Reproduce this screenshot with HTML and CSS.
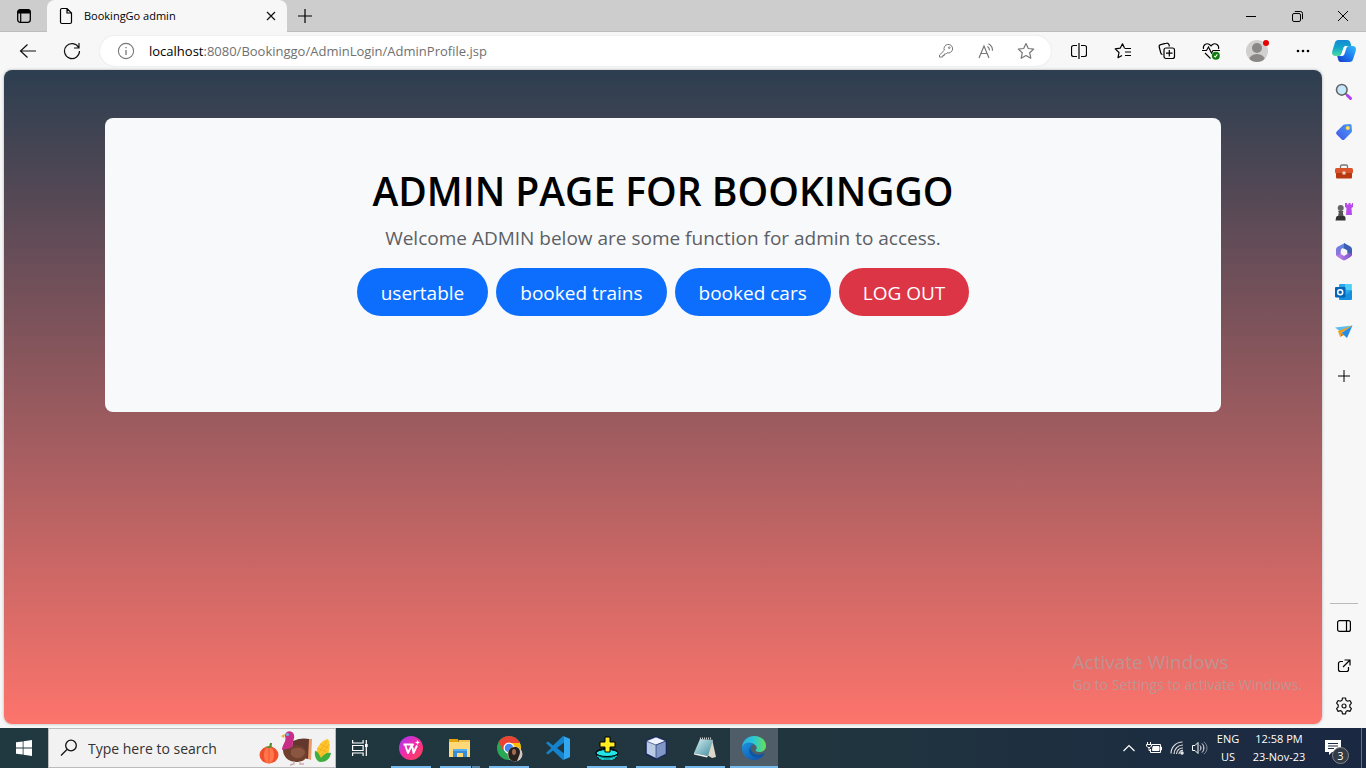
FILE: index.html
```html
<!DOCTYPE html>
<html lang="en">
<head>
<meta charset="utf-8">
<title>BookingGo admin</title>
<link rel="stylesheet" href="styles.css">
</head>
<body>
<div class="tabs">
  <button class="tab-actions" aria-label="Tab actions"><svg width="16" height="16" viewBox="0 0 16 16"><rect x="1.7" y="1.7" width="12.6" height="12.6" rx="2.5" fill="none" stroke="#000" stroke-width="1.3"/><path d="M1.5 5.5V4a2.5 2.5 0 0 1 2.5-2.500h8A2.500 2.500 0 0 1 14.500 4v1.500z"/><path d="M4.700 5v9" stroke="#000" stroke-width="1.200"/></svg></button>
  <div class="tab">
    <svg width="16" height="18" viewBox="0 0 16 18" fill="none" stroke="#000" stroke-width="1.200"><path d="M2.500 3A1.500 1.500 0 0 1 4 1.500h5L13.500 6v9a1.500 1.500 0 0 1-1.500 1.500H4A1.500 1.500 0 0 1 2.500 15zM9 1.500V6h4.500"/></svg>
    <span class="tab-title">BookingGo admin</span>
    <button class="tab-close" aria-label="Close tab"><svg width="10" height="10" viewBox="0 0 10 10" stroke="#111" stroke-width="1.200"><path d="M1 1l8 8M9 1L1 9"/></svg></button>
  </div>
  <button class="new-tab" aria-label="New tab"><svg width="14" height="14" viewBox="0 0 14 14" stroke="#000" stroke-width="1.200"><path d="M7 0v14M0 7h14"/></svg></button>
  <div class="window-buttons">
    <button aria-label="Minimize"><svg width="10" height="10" viewBox="0 0 10 10" stroke="#000"><path d="M0 5.500h10"/></svg></button>
    <button aria-label="Restore"><svg width="11" height="11" viewBox="0 0 11 11" fill="none" stroke="#000"><rect x=".5" y="2.500" width="8" height="8" rx="1.500"/><path d="M2.800.5H8.500a2 2 0 0 1 2 2v5.700"/></svg></button>
    <button aria-label="Close"><svg width="10" height="10" viewBox="0 0 10 10" stroke="#000"><path d="M0 0l10 10M10 0L0 10"/></svg></button>
  </div>
</div>

<div class="toolbar">
  <button class="nav" aria-label="Back"><svg width="18" height="16" viewBox="0 0 18 16" fill="none" stroke="#111" stroke-width="1.200"><path d="M17 8H1.500M8.500 1.500L1.500 8l7 6.500"/></svg></button>
  <button class="nav" aria-label="Refresh"><svg width="18" height="18" viewBox="0 0 18 18" fill="none" stroke="#111" stroke-width="1.200"><path d="M15.600 5.500A7.500 7.500 0 1 0 16.500 9M16 1v5h-5"/></svg></button>
  <div class="address">
    <button aria-label="Site information"><svg width="18" height="18" viewBox="0 0 18 18" fill="none" stroke="#777" stroke-width="1.100"><circle cx="9" cy="9" r="7.600"/><path d="M9 8v5M9 5v1.300" stroke-width="1.300"/></svg></button>
    <span class="url"><span class="url-host">localhost</span>:8080/Bookinggo/AdminLogin/AdminProfile.jsp</span>
    <button class="addr-icon" aria-label="Password"><svg width="16" height="16" viewBox="0 0 16 16" fill="none" stroke="#777"><path d="M6.300 7.300A4.300 4.300 0 1 1 9 9.800L7.800 11H6.300v1.500H4.800V14H1.500v-2z"/><circle cx="11.300" cy="4.700" r=".8"/></svg></button>
    <button class="addr-icon" aria-label="Read aloud"><svg width="18" height="18" viewBox="0 0 18 18" fill="none" stroke="#777" stroke-width="1.200"><path d="M2 16L7 4l5 12M4 11.500h6M10.500 4.500c1.500 1 2 2.500 2 4M11.500 1.800c3 1.600 4.200 4 4 7"/></svg></button>
    <button class="addr-icon" aria-label="Add to favorites"><svg width="18" height="18" viewBox="0 0 18 18" fill="none" stroke="#777" stroke-width="1.200" stroke-linejoin="round"><path d="M9 1.500l2.300 5 5.400.6-4 3.700 1.100 5.400L9 13.500l-4.800 2.700 1.100-5.400-4-3.700 5.400-.6z"/></svg></button>
  </div>
  <div class="tools">
    <button aria-label="Split screen"><svg width="16" height="16" viewBox="0 0 16 16" fill="none" stroke="#000" stroke-width="1.200"><path d="M6 2.500H2.500a2 2 0 0 0-2 2v7a2 2 0 0 0 2 2H6M10 2.500h3.500a2 2 0 0 1 2 2v7a2 2 0 0 1-2 2H10M8 0v16"/></svg></button>
    <button aria-label="Favorites"><svg width="18" height="18" viewBox="0 0 18 18" fill="none" stroke="#000" stroke-width="1.200" stroke-linejoin="round"><path d="M10.500 6L8.500 1.800 6.200 6.200l-5 .7L5 10.500l-1 5.200 4-2.200M10.500 6.500H17M11 10h6M11 13.500h6"/></svg></button>
    <button aria-label="Collections"><svg width="18" height="18" viewBox="0 0 18 18" fill="none" stroke="#000" stroke-width="1.200"><path d="M4.500 12.500A2 2 0 0 1 2.800 11L1.200 5a2 2 0 0 1 1.500-2.300L8.500 1.200A2 2 0 0 1 11 2.700l.4 1.800"/><rect x="6" y="6" width="10.500" height="10.500" rx="2"/><path d="M11.300 8v6.500M8 11.200h6.500"/></svg></button>
    <button aria-label="Browser essentials"><svg width="18" height="18" viewBox="0 0 18 18" fill="none" stroke="#000" stroke-width="1.100"><path d="M1.500 7C.5 3 4.500.5 7.500 2.500L9 4l1.500-1.500C13.500.5 17.500 3 16.500 7M0 8.500h4.500l2-3.500 3 6L11 8.500h7M3 11l5.500 5.500"/><circle cx="13.800" cy="13.800" r="4" fill="#107c10" stroke="none"/><path d="M12.300 14l1 1 2-2.600" stroke="#fff"/></svg></button>
    <button class="profile" aria-label="Profile"><svg width="26" height="26" viewBox="0 0 26 26"><defs><clipPath id="av"><circle cx="13" cy="13" r="11"/></clipPath></defs><circle cx="13" cy="13" r="11" fill="#d2d0ce"/><g clip-path="url(#av)" fill="#8a8886"><circle cx="13" cy="10" r="5"/><ellipse cx="13" cy="22" rx="8" ry="6"/></g><circle cx="22" cy="5" r="3" fill="#e60000"/></svg></button>
    <button aria-label="Settings and more"><svg width="14" height="4" viewBox="0 0 14 4"><circle cx="2" cy="2" r="1.300"/><circle cx="7" cy="2" r="1.300"/><circle cx="12" cy="2" r="1.300"/></svg></button>
  </div>
  <button class="copilot" aria-label="Copilot"><svg width="24" height="24" viewBox="0 0 24 24"><defs><linearGradient id="ca" x1="0" y1="0" x2="0" y2="1"><stop offset="0" stop-color="#1488d6"/><stop offset=".5" stop-color="#12a8c8"/><stop offset="1" stop-color="#4bdca0"/></linearGradient><linearGradient id="cb" x1="0" y1="1" x2="1" y2="0"><stop offset="0" stop-color="#1936c8"/><stop offset=".5" stop-color="#1b7bf0"/><stop offset="1" stop-color="#33bdf8"/></linearGradient></defs><path d="M6.500 1H15c2 0 3 1 3.500 3l.8 3H14c-1.500 0-2.200 1-2.700 2.500l-1.600 5C9.200 16 8.500 17 7 17H3.500c-3 0-4-2-3.200-5L3 3.500C3.500 2 4.500 1 6.500 1z" fill="url(#ca)"/><path d="M17.500 23H9c-2 0-2.500-1-3-3l-.8-3H10c1.500 0 2.200-1 2.700-2.500l1.600-5C14.800 8 15.500 7 17 7h3.500c3 0 4 2 3.200 5L21 20.500c-.5 1.500-1.500 2.500-3.500 2.500z" fill="url(#cb)"/><path d="M11.300 9.500C11.800 8 12.500 7 14 7h1.500c-1 .3-1.500 1-1.800 2l-2 6c-.3 1-1 2-2.500 2H8c1-.3 1.400-1.200 1.700-2.500z" fill="#fff"/></svg></button>
</div>

<div class="workspace">
  <main class="page">
    <section class="card">
      <h1>ADMIN PAGE FOR BOOKINGGO</h1>
      <p>Welcome ADMIN below are some function for admin to access.</p>
      <div class="actions">
        <a class="btn" href="#usertable">usertable</a>
        <a class="btn" href="#trains">booked trains</a>
        <a class="btn" href="#cars">booked cars</a>
        <a class="btn btn-danger" href="#logout">LOG OUT</a>
      </div>
    </section>
  </main>
  <aside class="sidebar">
    <button aria-label="Search"><svg width="18" height="18" viewBox="0 0 18 18"><path d="M10.500 10.500l2 2" stroke="#777" stroke-width="2"/><path d="M12.500 12.500l3 3" stroke="#b33cf0" stroke-width="3" stroke-linecap="round"/><circle cx="6.800" cy="6.800" r="5.300" fill="#c4e7fb" stroke="#666" stroke-width="1.600"/></svg></button>
    <button aria-label="Shopping"><svg width="18" height="18" viewBox="0 0 18 18"><defs><linearGradient id="tg" x1="0" y1="1" x2="1" y2="0"><stop offset="0" stop-color="#4258e8"/><stop offset="1" stop-color="#4b9bf8"/></linearGradient></defs><path d="M9.500 1.500L15 1a1.500 1.500 0 0 1 1.600 1.500l.4 5.500a2 2 0 0 1-.6 1.500L9.500 16.400a2 2 0 0 1-2.800 0l-5-5a2 2 0 0 1 0-2.800L8 2.200a2 2 0 0 1 1.500-.7z" fill="url(#tg)"/><circle cx="12.800" cy="5" r="2.100" fill="#ffd23c"/><circle cx="12.800" cy="5" r=".8" fill="#fff"/></svg></button>
    <button aria-label="Tools"><svg width="18" height="18" viewBox="0 0 18 18"><path d="M5.500 6V3.500C5.500 2.500 6 2 7 2h4c1 0 1.500.5 1.500 1.500V6" fill="none" stroke="#777" stroke-width="1.300"/><rect x="0" y="5" width="18" height="5.500" rx="1.500" fill="#d9532b"/><path d="M1 10h16v4.500a1 1 0 0 1-1 1H2a1 1 0 0 1-1-1z" fill="#b8390f"/><rect x="7.500" y="8.500" width="3" height="3" rx=".5" fill="#ead7ce"/></svg></button>
    <button aria-label="Games"><svg width="18" height="18" viewBox="0 0 18 18"><path d="M10 0h2v1.500h1.500V0h2v1.500H17V0h1v4l-1.500 1 .5 7h-6l.5-7L10 4z" fill="#b94bee"/><circle cx="5.700" cy="5" r="3" fill="#666"/><path d="M3 8h5.500l-.7 1.500 1 4.500h-6l1-4.500z" fill="#555"/><path d="M1 15c0-1.500 1-2 2-2h5.500c1 0 2 .5 2 2v2.500H.5z" fill="#333"/></svg></button>
    <button aria-label="Microsoft 365"><svg width="18" height="18" viewBox="0 0 18 18"><defs><linearGradient id="ma" x1="1" y1="0" x2="0" y2="1"><stop offset="0" stop-color="#4b8de0"/><stop offset="1" stop-color="#9a6fe0"/></linearGradient><linearGradient id="mb" x1="0" y1="0" x2="1" y2="0"><stop offset="0" stop-color="#c98af0"/><stop offset="1" stop-color="#7a52c9"/></linearGradient></defs><path d="M10 0L3 3.600C1.500 4.500 1 5.500 1 7v4.500c0 1.500 1.500 2.500 3 1.500l2-1.500V7.300C6 6.300 6.500 5.700 7.300 5.200L10 3.500z" fill="url(#ma)"/><path d="M9 0l6 3.300c1.500.9 2 1.900 2 3.400V12l-2 1.500-3-2.500V7.500L7.500 5 9 4z" fill="#3b60b4"/><path d="M1.200 12c.3 1 1 1.700 2 2.300l4 2.400c1.200.7 2.400.7 3.600 0l4.200-2.500c1.500-.9 2-2 2-3.400l-5-1-3 2-3-1.500-2.500 2.200z" fill="url(#mb)"/><path d="M9 5.500l3.300 1.900v3.700L9 13l-3.300-1.900V7.400z" fill="#f7f7f7"/></svg></button>
    <button aria-label="Outlook"><svg width="18" height="18" viewBox="0 0 18 18"><rect x="4" y="1" width="12.500" height="12" rx="1" fill="#28a8ea"/><path d="M10 1h6.500v6H10z" fill="#50d0f5"/><path d="M4 8l6.500 4L17 7v9a1 1 0 0 1-1 1H5a1 1 0 0 1-1-1z" fill="#1490df"/><rect y="4" width="10.500" height="10.500" rx="1" fill="#0364b8"/><circle cx="5.200" cy="9.200" r="2.500" fill="none" stroke="#fff" stroke-width="1.500"/></svg></button>
    <button aria-label="Drop"><svg width="18" height="18" viewBox="0 0 18 18"><path d="M0 4.500l17.500-2L6 9z" fill="#57bdf4"/><path d="M3 8l14.500-5.500L6.500 10 5 14z" fill="#f0a020"/><path d="M17.500 2.500L12 15l-5.500-5z" fill="#258de6"/><path d="M6.500 10L9 12l-4 2z" fill="#d77b10"/></svg></button>
    <button class="customize" aria-label="Customize"><svg width="12" height="12" viewBox="0 0 12 12" stroke="#000"><path d="M6 0v12M0 6h12"/></svg></button>
    <div class="sidebar-bottom">
      <button aria-label="Hide sidebar"><svg width="14" height="12" viewBox="0 0 14 12" fill="none" stroke="#000" stroke-width="1.200"><rect x=".6" y=".6" width="12.800" height="10.800" rx="2"/><path d="M9.500.5v11"/></svg></button>
      <button aria-label="Open link"><svg width="14" height="14" viewBox="0 0 14 14" fill="none" stroke="#000" stroke-width="1.200"><path d="M6 2.500H3.500a2 2 0 0 0-2 2v6a2 2 0 0 0 2 2h6a2 2 0 0 0 2-2V8M7.500 1H13v5.500M13 1L6 8"/></svg></button>
      <button aria-label="Settings"><svg width="18" height="18" viewBox="0 0 18 18" fill="none" stroke="#111" stroke-width="1.200" stroke-linejoin="round"><path d="M7.500 1h3l.5 2.300 1.600.9 2.300-.7 1.500 2.600L14.800 8v2l1.600 1.700-1.500 2.700-2.300-.8-1.600 1-.5 2.300h-3L7 14.600l-1.600-1-2.300.8-1.500-2.700L3.200 10V8L1.600 6.100l1.500-2.600 2.300.7L7 3.300z"/><circle cx="9" cy="9" r="2"/></svg></button>
    </div>
  </aside>
</div>

<div class="watermark"><div class="watermark-title">Activate Windows</div><div>Go to Settings to activate Windows.</div></div>

<footer class="taskbar">
  <button class="cell" aria-label="Start"><svg width="16" height="16" viewBox="0 0 16 16" fill="#fff"><path d="M0 2.300L6.700 1.400V7.600H0zM7.500 1.300L16 0v7.600H7.500zM0 8.400h6.700v6.200L0 13.700zM7.500 8.400H16V16l-8.500-1.200z"/></svg></button>
  <div class="search">
    <svg width="18" height="18" viewBox="0 0 18 18" fill="none" stroke="#111" stroke-width="1.300"><circle cx="11" cy="6.500" r="5.300"/><path d="M7 10.500L1 16.500"/></svg>
    <input type="text" placeholder="Type here to search" aria-label="Type here to search">
    <svg width="74" height="36" viewBox="0 0 74 36"><path d="M10 17l1-4 2 0-.5 4z" fill="#4a8c28"/><ellipse cx="10" cy="25" rx="9.500" ry="8.500" fill="#f4512c"/><ellipse cx="10" cy="25" rx="5" ry="8.500" fill="#ff774a"/><path d="M10 17v16M5 18c-2 4-2 10 0 14M15 18c2 4 2 10 0 14" stroke="#e8482a" stroke-width=".7" fill="none"/><path d="M6 17c3-1 5-1 8 0l-4 1z" fill="#4a8c28"/><path d="M48 9l5 0-1 21-6-2z" fill="#e79a68"/><path d="M34 11c6-3 12-3 16-2l-1 20-16-4z" fill="#62382d"/><path d="M26 16c2 1 6-1 8 0 5-2 12 0 14 7 0 7-5 9-11 9-7 0-13-5-13-12 0-2 1-3 2-4z" fill="#70402f"/><path d="M26 6c0-6 8-6 9-1 1 4-2 6-1 10l-2 3-9 2c0-6 5-8 3-14z" fill="#c82e88"/><path d="M26 4l-4 2 3 2z" fill="#f4a52a"/><circle cx="28.500" cy="4.500" r="1.600" fill="#65b7dc"/><path d="M32 20c5-4 14-2 14 3-3 7-10 6-14 2z" fill="#8b5640"/><path d="M35 31v3l-4 1M41 31v3h4" stroke="#c9a9b0" stroke-width="1.300" fill="none"/><path d="M57 27c-1-8 5-17 12-18 4 6 1 18-6 21z" fill="#ffc62b"/><path d="M59 24l9-13M61 27l9-13M58 18l10 4M61 14l8 4" stroke="#f0aa20" stroke-width=".8"/><path d="M56 21c3 0 5 5 6 7 3-4 6-6 10-5-1 6-5 9-10 9-4 0-7-5-6-11z" fill="#3fae3c"/></svg>
  </div>
  <button class="cell" aria-label="Task view"><svg width="16" height="16" viewBox="0 0 16 16" fill="none" stroke="#fff" stroke-width="1.200"><path d="M.6 0v3h10.500V0M.6 16v-3h10.500v3M.6 5.500h10.500v5H.6zM14.300 0v16"/><rect x="13" y="4" width="2.700" height="3" fill="#fff" stroke="none"/></svg></button>
  <div class="apps">
    <button class="app running" aria-label="WPS Office"><svg width="24" height="24" viewBox="0 0 24 24"><defs><linearGradient id="wp" x1="0" y1="0" x2="1" y2="1"><stop offset="0" stop-color="#a338ff"/><stop offset=".5" stop-color="#f32ca4"/><stop offset="1" stop-color="#ff4545"/></linearGradient></defs><circle cx="12" cy="12" r="12" fill="url(#wp)"/><path d="M4.500 8.500h9.500l-2 3.500M6 8.500l3 8.500 4-8.500 1.500 8.500 3.500-7.500" fill="none" stroke="#fff" stroke-width="1.900" stroke-linejoin="round"/><path d="M18.500 4l.8 1.700 1.700.8-1.700.8-.8 1.700-.8-1.700-1.700-.8 1.700-.8z" fill="#fff"/></svg></button>
    <button class="app running grouped" aria-label="File Explorer"><svg width="24" height="24" viewBox="0 0 24 24"><path d="M1 3h9l1 3H1z" fill="#e5a50a"/><path d="M11 4h11v3H11z" fill="#f0c04d"/><path d="M1 6h21v15H1z" fill="#ffd978"/><path d="M5 21v-8h14v8h-4v-4H9v4z" fill="#368dd5"/><path d="M5 13h14v2H5z" fill="#55aef0"/></svg></button>
    <button class="app running" aria-label="Chrome"><svg width="28" height="28" viewBox="0 0 28 28"><circle cx="14" cy="14" r="12" fill="#28a853"/><path d="M3.600 8A12 12 0 0 1 24.400 8L14 14z" fill="#ea4335"/><path d="M24.400 8A12 12 0 0 1 14 26l5-9-5-9z" fill="#fbbc05"/><path d="M3.600 8h21v1H14l-5.500 8z" fill="#ea4335"/><circle cx="14" cy="14" r="5.500" fill="#fff"/><circle cx="14" cy="14" r="4.300" fill="#4285f4"/><circle cx="20" cy="20" r="7.500" fill="#d3c7bb"/><path d="M14 24c-2-6 0-11 6-11 5 0 6 5 4 9l-2 5c-3 1-6 0-8-3z" fill="#29211f"/><ellipse cx="19" cy="18" rx="2" ry="3" fill="#a06c50"/></svg></button>
    <button class="app" aria-label="Visual Studio Code"><svg width="24" height="24" viewBox="0 0 24 24"><path d="M17 0l7 3v18l-7 3L7 14.500 2 18.500 0 17l5.300-5L0 7l2-1.500 5 4zM18 6.500L11 12l7 5.500z" fill="#1683cd" fill-rule="evenodd"/><path d="M18 .5l6 2.500v18l-6 2.500z" fill="#31a7f2"/></svg></button>
    <button class="app running" aria-label="Dev tool"><svg width="24" height="24" viewBox="0 0 24 24" stroke="#000"><path d="M1 17c0-6 21-6 22 0l-2 5c-4 3-14 3-18 0z" fill="#006f75"/><ellipse cx="12" cy="17" rx="11" ry="3.500" fill="#23e5e5"/><path d="M2 20c6 4 14 4 20 0M4 22c5 3 11 3 16 0" fill="none" stroke="#23e5e5"/><path d="M10 1h5v5h5v5h-5v5h-5v-5H5V6h5z" fill="#ffed20"/></svg></button>
    <button class="app running" aria-label="NetBeans"><svg width="24" height="24" viewBox="0 0 24 24" stroke="#17235b" stroke-width="1.500" stroke-linejoin="round"><path d="M12 1l10 4v13l-10 5-10-5V5z" fill="#b9cae5"/><path d="M12 1l10 4-10 4L2 5z" fill="#eef5ff" stroke-width=".6"/><path d="M12 9l10-4v13l-10 5z" fill="#7f98c5" stroke-width=".6"/></svg></button>
    <button class="app running" aria-label="Notepad"><svg width="24" height="24" viewBox="0 0 24 24"><defs><linearGradient id="np" x1="0" y1="0" x2="1" y2="1"><stop offset="0" stop-color="#d3eef2"/><stop offset="1" stop-color="#408d9c"/></linearGradient></defs><path d="M19 3l4 18-4 1-5-3z" fill="#ddd7ca"/><path d="M7 3l13 1-5 16-14-3z" fill="url(#np)"/><path d="M1 17l14 3-1 1.500L1 18.500z" fill="#eef3f1"/><path d="M7 2.500h12" stroke="#ccc" stroke-width="2" stroke-dasharray="1 1"/></svg></button>
    <button class="app active" aria-label="Microsoft Edge"><svg width="24" height="24" viewBox="0 0 24 24"><defs><linearGradient id="ea" x1="0" y1="0" x2="1" y2="0"><stop offset="0" stop-color="#28aee8"/><stop offset=".5" stop-color="#2cc8d5"/><stop offset="1" stop-color="#68df52"/></linearGradient><linearGradient id="eb" x1="0" y1="0" x2="1" y2="1"><stop offset="0" stop-color="#1b93df"/><stop offset="1" stop-color="#0c4ba5"/></linearGradient></defs><path d="M0 12C0 5 5 0 12 0c8 0 12 5 12 10 0 4-3 6-7 6-3 0-4-1-3-2.500 1-1 1-2 0-3.500C10 5 2 6 0 12z" fill="url(#ea)"/><path d="M0 12c1-5 8-7 12-3.500C8 9 8 12 9 14c2 5 8 6 14 3-2 4-6 7-11 7C5 24 0 19 0 12z" fill="url(#eb)"/><path d="M12 8.500C8 9 8 12 9 14c2 5 8 6 14 3-2.500 4-7 5-10 4C6 19 5 11 12 8.500z" fill="#0f559f"/></svg></button>
  </div>
  <div class="tray">
    <button class="tray-up" aria-label="Show hidden icons"><svg width="12" height="8" viewBox="0 0 12 8" fill="none" stroke="#fff" stroke-width="1.200"><path d="M.5 7L6 1.500 11.500 7"/></svg></button>
    <button class="tray-icon" aria-label="Battery"><svg width="16" height="12" viewBox="0 0 16 12" fill="none" stroke="#fff"><path d="M6 2.500h8.500v8H4.500V7M14.500 5h1v3h-1"/><path d="M7 4.500h6v4H6.500z" fill="#fff"/><path d="M1.500 0v2M4.500 0v2M.5 2.500h5V4L4 5.500H2L.5 4zM3 5.500v3h2"/></svg></button>
    <button class="tray-icon" aria-label="Network"><svg width="14" height="14" viewBox="0 0 14 14" fill="none" stroke="#ddd" stroke-width="1.200"><path d="M1 12.500A11.500 11.500 0 0 1 12.500 1M4 13A9 9 0 0 1 13 4M6.500 13A6 6 0 0 1 13 7M9 13a3.500 3.500 0 0 1 4-3.500"/><circle cx="12" cy="12" r="1.200" fill="#fff"/></svg></button>
    <button class="tray-icon" aria-label="Volume"><svg width="16" height="14" viewBox="0 0 16 14" fill="none" stroke="#fff"><path d="M.5 4.500H3L6 1.500v11l-3-3H.5zM8 4.500c1.300 1.300 1.300 3.700 0 5M10 2.500c2.500 2.500 2.500 6.500 0 9"/><path d="M12 .8c4 3.700 4 8.700 0 12.400" stroke="#889"/></svg></button>
    <button class="lang"><span>ENG</span><span>US</span></button>
    <button class="clock"><span>12:58 PM</span><span>23-Nov-23</span></button>
    <button class="notify" aria-label="Notifications"><svg width="16" height="16" viewBox="0 0 16 16"><path d="M0 0h16v12H7l-3 3v-3H0z" fill="#fff"/><path d="M3 3.500h10M3 6h10M3 8.500h6" stroke="#1a2a42"/></svg><span class="count">3</span></button>
    <div class="show-desktop"></div>
  </div>
</footer>
</body>
</html>
```
FILE: styles.css
```css
* { box-sizing: border-box; }
body {
  margin: 0;
  height: 100vh;
  display: flex;
  flex-direction: column;
  overflow: hidden;
  background: #f7f7f7;
  color: #000;
  font: 12px/18px "Open Sans", "Noto Sans", sans-serif;
}
button {
  display: flex;
  align-items: center;
  justify-content: center;
  margin: 0;
  padding: 0;
  border: 0;
  background: none;
  color: inherit;
  font: inherit;
}
svg { display: block; flex: none; }

.tabs { display: flex; height: 32px; background: #cdcdcd; box-shadow: inset 0 -1px #bdbdbd; }
.tab-actions { width: 47px; }
.tab {
  display: flex;
  align-items: center;
  width: 240px;
  padding: 0 10px 0 11px;
  border-radius: 8px 8px 0 0;
  background: #f7f7f7;
}
.tab-title { flex: 1; padding-left: 10px; font-size: 11px; }
.tab-close { width: 12px; height: 20px; }
.new-tab { width: 36px; }
.window-buttons { display: flex; margin-left: auto; }
.window-buttons button { width: 46px; }

.toolbar { display: flex; align-items: center; flex: none; height: 38px; padding: 0 3px 0 6px; }
.nav { width: 44px; height: 32px; }
.address {
  display: flex;
  align-items: center;
  flex: 1;
  height: 30px;
  margin: 0 6px;
  padding: 0 5px 0 17px;
  border-radius: 15px;
  background: #fff;
  box-shadow: 0 0 2px #ddd;
}
.url { flex: 1; padding-left: 14px; color: #707070; font-size: 13px; }
.url-host { color: #000; }
.addr-icon { width: 40px; }
.tools { display: flex; align-items: center; }
.tools button { width: 44px; height: 32px; }
.tools .profile { width: 48px; }
.copilot { width: 38px; }

.workspace { display: flex; flex: 1; min-height: 0; padding: 0 0 4px 4px; }
.page {
  flex: 1;
  padding: 48px 24px;
  border-radius: 8px;
  background: linear-gradient(#2c3e50, #fd746c);
  box-shadow: 0 0 3px #aaa;
}
.card {
  max-width: 1116px;
  margin: 0 auto;
  padding: 48px 48px 96px;
  border-radius: 8px;
  background: #f8f9fb;
  text-align: center;
}
.card h1 { margin: 0 0 8px; font-size: 39px; line-height: 50px; font-weight: 600; }
.card p { margin: 0 0 16px; color: #5c6065; font-size: 19px; line-height: 28px; }
.actions { display: flex; justify-content: center; gap: 8px; }
.btn {
  padding: 10px 24px 8px;
  border-radius: 24px;
  background: #0d6efd;
  color: #fff;
  font-size: 19px;
  line-height: 30px;
  text-decoration: none;
}
.btn-danger { background: #dc3545; }

.sidebar { display: flex; flex-direction: column; width: 44px; padding-top: 2px; }
.sidebar button { width: 44px; height: 40px; }
.sidebar .customize { height: 48px; }
.sidebar-bottom { margin: auto 0 -2px; }
.sidebar-bottom::before { content: ""; display: block; width: 28px; height: 1px; margin: 0 auto 2px 8px; background: #bbb; }

.watermark { position: absolute; right: 64px; bottom: 72px; color: rgba(165, 165, 165, .7); font-size: 14px; line-height: 22px; }
.watermark-title { font-size: 19px; line-height: 24px; }

.taskbar { display: flex; flex: none; height: 40px; background: linear-gradient(90deg, #203840, #21353f 60%, #1a2842); color: #fff; }
.cell { width: 48px; }
.search { display: flex; align-items: center; width: 288px; padding: 0 2px 0 11px; border: 1px solid #bbb; background: #f2f2f2; }
.search input { flex: 1; min-width: 0; padding: 2px 0 0 10px; border: 0; outline: 0; background: none; font: 14px/20px "Open Sans", sans-serif; }
.search input::placeholder { color: #333; opacity: 1; }
.apps { display: flex; gap: 1px; margin-left: 3px; }
.app { width: 48px; }
.running { background: linear-gradient(#76b9ed, #76b9ed) bottom / 40px 2px no-repeat; }
.grouped { background: linear-gradient(90deg, #76b9ed 31px, #20353f 31px, #20353f 32px, #5688ac 32px) bottom / 40px 2px no-repeat; }
.active { background: linear-gradient(#76b9ed, #76b9ed) bottom / 48px 2px no-repeat #4e5d68; }
.tray { display: flex; margin-left: auto; font-size: 11px; }
.tray-up { width: 26px; }
.tray-icon { width: 23px; }
.lang, .clock { flex-direction: column; width: 34px; }
.clock { width: 68px; }
.notify { position: relative; justify-content: flex-start; width: 48px; padding-left: 12px; }
.count {
  position: absolute;
  right: 12px;
  bottom: 4px;
  width: 17px;
  height: 17px;
  border: 1px solid #888;
  border-radius: 50%;
  background: #333b46;
  font-size: 11px;
  line-height: 15px;
}
.show-desktop { width: 5px; border-left: 1px solid #66717f; }
```
